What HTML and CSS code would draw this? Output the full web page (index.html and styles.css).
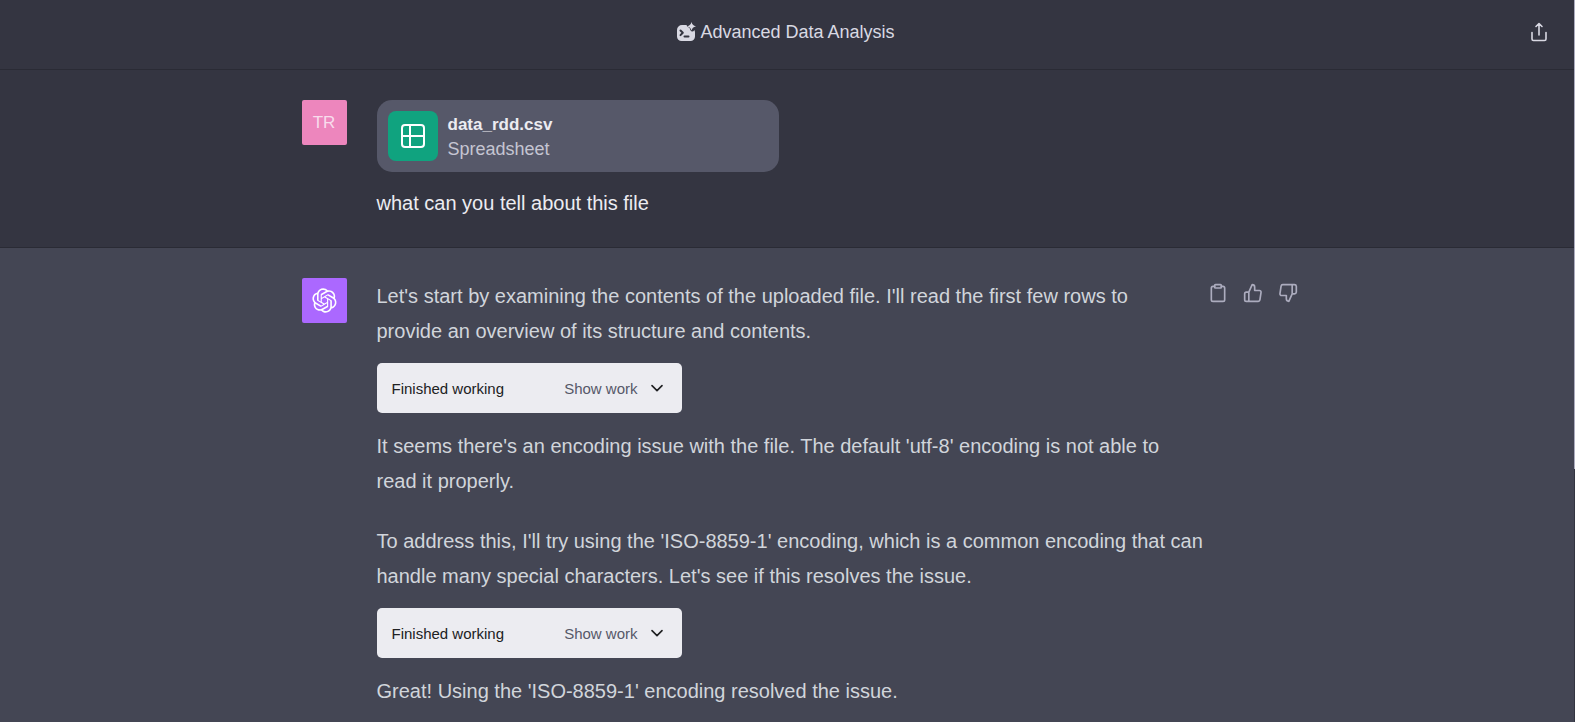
FILE: index.html
```html
<!DOCTYPE html>
<html lang="en">
<head>
<meta charset="utf-8">
<title>Advanced Data Analysis</title>
<link rel="stylesheet" href="styles.css">
</head>
<body>
<header class="topbar">
  <h1 class="title">
    <svg class="title-icon" viewBox="0 0 20 20" aria-hidden="true">
      <path fill="currentColor" d="M6 3h4.500q.5 2 2.500 2.600 1 .6 1.300 2.400.8 1.600 2 1.600t2-1.500q.7 1.400.7 2.400v4a4.500 4.500 0 0 1-4.500 4.500h-9A4.500 4.500 0 0 1 1 14.500V8a5 5 0 0 1 5-5Z"/>
      <path fill="currentColor" d="M15.500 0c.8 2.600 1.600 3.500 4.500 4.300-2.900.8-3.700 1.700-4.500 4.300-.8-2.600-1.600-3.500-4.500-4.300 2.900-.8 3.700-1.700 4.500-4.300Z"/>
      <path class="title-prompt" d="m4.500 8.500 2.300 2.300-2.300 2.300M8.500 14.500h4"/>
    </svg>
    <span>Advanced Data Analysis</span>
  </h1>
  <button class="icon-button share" type="button" aria-label="Share chat">
    <svg class="share-icon" viewBox="0 0 20 20" aria-hidden="true"><path d="M10 13V2M7 4.500 10 1.500 13 4.500M3 10.500V17q0 1.500 1.500 1.500h11q1.500 0 1.500-1.500v-6.500"/></svg>
  </button>
</header>
<main>
  <section class="turn turn-user">
    <div class="thread">
      <div class="avatar avatar-user">TR</div>
      <div class="message">
        <div class="file">
          <span class="file-tile">
            <svg class="file-icon" viewBox="0 0 24 24" aria-hidden="true"><rect x="1" y="1" width="22" height="22" rx="3"/><path d="M9 1v22M1 12h22"/></svg>
          </span>
          <div class="file-text">
            <div class="file-name">data_rdd.csv</div>
            <div class="file-kind">Spreadsheet</div>
          </div>
        </div>
        <p class="prompt">what can you tell about this file</p>
      </div>
    </div>
  </section>
  <section class="turn turn-assistant">
    <div class="thread">
      <div class="avatar avatar-assistant">
        <svg class="logo" viewBox="0 0 41 41" aria-hidden="true"><path d="M37.5324 16.8707C37.9808 15.5241 38.1363 14.0974 37.9886 12.6859C37.8409 11.2744 37.3934 9.91076 36.676 8.68622C35.6126 6.83404 33.9882 5.3676 32.0373 4.4985C30.0864 3.62941 27.9098 3.40259 25.8215 3.85078C24.8796 2.7893 23.7219 1.94125 22.4257 1.36341C21.1295 0.785575 19.7249 0.491269 18.3058 0.500197C16.1708 0.495044 14.0893 1.16803 12.3614 2.42214C10.6335 3.67624 9.34853 5.44666 8.6917 7.47815C7.30085 7.76286 5.98686 8.3414 4.8377 9.17505C3.68854 10.0087 2.73073 11.0782 2.02839 12.312C0.956464 14.1591 0.498905 16.2988 0.721698 18.4228C0.944492 20.5467 1.83612 22.5449 3.268 24.1293C2.81966 25.4759 2.66413 26.9026 2.81182 28.3141C2.95951 29.7256 3.40701 31.0892 4.12437 32.3138C5.18791 34.1659 6.8123 35.6322 8.76321 36.5013C10.7141 37.3704 12.8907 37.5973 14.9789 37.1492C15.9208 38.2107 17.0786 39.0587 18.3747 39.6366C19.6709 40.2144 21.0755 40.5087 22.4946 40.4998C24.6307 40.5054 26.7133 39.8321 28.4418 38.5772C30.1704 37.3223 31.4556 35.5506 32.1119 33.5179C33.5027 33.2332 34.8167 32.6547 35.9659 31.821C37.115 30.9874 38.0728 29.9178 38.7752 28.684C39.8458 26.8371 40.3023 24.6979 40.0789 22.5748C39.8556 20.4517 38.9639 18.4544 37.5324 16.8707ZM22.4978 37.8849C20.7443 37.8874 19.0459 37.2733 17.6994 36.1501C17.7601 36.117 17.8666 36.0586 17.936 36.0161L25.9004 31.4156C26.1003 31.3019 26.2663 31.137 26.3813 30.9378C26.4964 30.7386 26.5563 30.5124 26.5549 30.2825V19.0542L29.9213 20.998C29.9389 21.0068 29.9541 21.0198 29.9656 21.0359C29.977 21.052 29.9842 21.0707 29.9867 21.0902V30.3889C29.9842 32.375 29.1946 34.2791 27.7909 35.6841C26.3872 37.0892 24.4838 37.8806 22.4978 37.8849ZM6.39227 31.0064C5.51397 29.4888 5.19742 27.7107 5.49804 25.9832C5.55718 26.0187 5.66048 26.0818 5.73461 26.1244L13.699 30.7248C13.8975 30.8408 14.1233 30.902 14.3532 30.902C14.583 30.902 14.8088 30.8408 15.0073 30.7248L24.731 25.1103V28.9979C24.7321 29.0177 24.7283 29.0376 24.7199 29.0556C24.7115 29.0736 24.6988 29.0893 24.6829 29.1012L16.6317 33.7497C14.9096 34.7416 12.8643 35.0097 10.9447 34.4954C9.02506 33.9811 7.38785 32.7263 6.39227 31.0064ZM4.29707 13.6194C5.17156 12.0998 6.55279 10.9364 8.19885 10.3327C8.19885 10.4013 8.19491 10.5228 8.19491 10.6071V19.808C8.19351 20.0378 8.25334 20.2638 8.36823 20.4629C8.48312 20.6619 8.64893 20.8267 8.84863 20.9404L18.5723 26.5542L15.206 28.4979C15.1894 28.5089 15.1703 28.5155 15.1505 28.5173C15.1307 28.5191 15.1107 28.516 15.0924 28.5082L7.04046 23.8557C5.32135 22.8601 4.06716 21.2235 3.55289 19.3046C3.03862 17.3858 3.30624 15.3413 4.29707 13.6194ZM31.955 20.0556L22.2312 14.4411L25.5976 12.4981C25.6142 12.4872 25.6333 12.4805 25.6531 12.4787C25.6729 12.4769 25.6928 12.4801 25.7111 12.4879L33.7631 17.1364C34.9967 17.849 36.0017 18.8982 36.6606 20.1613C37.3194 21.4244 37.6047 22.849 37.4832 24.2684C37.3617 25.6878 36.8382 27.0432 35.9743 28.1759C35.1103 29.3086 33.9415 30.1717 32.6047 30.6641C32.6047 30.5947 32.6047 30.4733 32.6047 30.3889V21.188C32.6066 20.9586 32.5474 20.7328 32.4332 20.5338C32.319 20.3348 32.154 20.1698 31.955 20.0556ZM35.3055 15.0128C35.2464 14.9765 35.1431 14.9142 35.069 14.8717L27.1045 10.2712C26.906 10.1554 26.6803 10.0943 26.4504 10.0943C26.2206 10.0943 25.9948 10.1554 25.7963 10.2712L16.0726 15.8858V11.9982C16.0715 11.9783 16.0753 11.9585 16.0837 11.9405C16.0921 11.9225 16.1048 11.9068 16.1207 11.8949L24.1719 7.25025C25.4053 6.53903 26.8158 6.19376 28.2383 6.25482C29.6608 6.31589 31.0364 6.78077 32.2044 7.59508C33.3723 8.40939 34.2842 9.53945 34.8334 10.8531C35.3826 12.1667 35.5464 13.6095 35.3055 15.0128ZM14.2424 21.9419L10.8752 19.9981C10.8576 19.9893 10.8423 19.9763 10.8309 19.9602C10.8195 19.9441 10.8122 19.9254 10.8098 19.9058V10.6071C10.8107 9.18295 11.2173 7.78848 11.9819 6.58696C12.7466 5.38544 13.8377 4.42659 15.1275 3.82264C16.4173 3.21869 17.8524 2.99464 19.2649 3.1767C20.6775 3.35876 22.0089 3.93941 23.1034 4.85067C23.0427 4.88379 22.937 4.94215 22.8668 4.98473L14.9024 9.58517C14.7025 9.69878 14.5366 9.86356 14.4215 10.0626C14.3065 10.2616 14.2466 10.4877 14.2479 10.7175L14.2424 21.9419ZM16.071 17.9991L20.4018 15.4978L24.7325 17.9975V22.9985L20.4018 25.4983L16.071 22.9985V17.9991Z"/></svg>
      </div>
      <div class="message reply">
        <p class="lead">Let's start by examining the contents of the uploaded file. I'll read the first few rows to provide an overview of its structure and contents.</p>
        <div class="work">
          <span>Finished working</span>
          <button class="work-toggle" type="button">Show work
            <svg class="chevron" viewBox="0 0 24 24" aria-hidden="true"><path d="m6 8 6 6 6-6"/></svg>
          </button>
        </div>
        <p class="lead">It seems there's an encoding issue with the file. The default 'utf-8' encoding is not able to read it properly.</p>
        <p class="next">To address this, I'll try using the 'ISO-8859-1' encoding, which is a common encoding that can handle many special characters. Let's see if this resolves the issue.</p>
        <div class="work">
          <span>Finished working</span>
          <button class="work-toggle" type="button">Show work
            <svg class="chevron" viewBox="0 0 24 24" aria-hidden="true"><path d="m6 8 6 6 6-6"/></svg>
          </button>
        </div>
        <p>Great! Using the 'ISO-8859-1' encoding resolved the issue.</p>
      </div>
      <div class="actions">
        <button class="icon-button" type="button" aria-label="Copy">
          <svg class="action-icon" viewBox="0 0 24 24" aria-hidden="true"><path d="M16 4h2a2 2 0 0 1 2 2v14a2 2 0 0 1-2 2H6a2 2 0 0 1-2-2V6a2 2 0 0 1 2-2h2"/><rect x="8" y="2" width="8" height="4" rx="1"/></svg>
        </button>
        <button class="icon-button" type="button" aria-label="Good response">
          <svg class="action-icon" viewBox="0 0 24 24" aria-hidden="true"><path d="M14 9V5a3 3 0 0 0-3-3l-4 9v11h11.280a2 2 0 0 0 2-1.700l1.380-9a2 2 0 0 0-2-2.300zM7 22H4a2 2 0 0 1-2-2v-7a2 2 0 0 1 2-2h3"/></svg>
        </button>
        <button class="icon-button" type="button" aria-label="Bad response">
          <svg class="action-icon" viewBox="0 0 24 24" aria-hidden="true"><path d="M10 15v4a3 3 0 0 0 3 3l4-9V2H5.720a2 2 0 0 0-2 1.700l-1.380 9a2 2 0 0 0 2 2.300zm7-13h2.670A2.310 2.310 0 0 1 22 4v7a2.310 2.310 0 0 1-2.330 2H17"/></svg>
        </button>
      </div>
    </div>
  </section>
</main>
<div class="scrollbar" aria-hidden="true"><div class="scroll-thumb"></div></div>
</body>
</html>
```
FILE: styles.css
```css
* { box-sizing: border-box; }

body {
  margin: 0;
  min-height: 100vh;
  display: flex;
  flex-direction: column;
  overflow: hidden;
  background: #444654;
  color: #ececf1;
  font-family: "Liberation Sans", Arial, sans-serif;
  font-size: 20px;
  line-height: 35px;
}

p { margin: 0; }
button { font: inherit; }
svg { display: block; flex: none; }

.topbar {
  display: grid;
  grid-template-columns: 1fr auto 1fr;
  padding: 17px 26px 22px 22px;
  background: #343541;
  border-bottom: 1px solid #2a2b35;
}

.title {
  grid-column: 2;
  display: flex;
  align-items: center;
  gap: 4px;
  margin: 0;
  color: #d9d9e3;
  font-size: 18px;
  font-weight: 400;
  line-height: 30px;
}

.title-icon { width: 20px; height: 20px; }
.title-prompt { fill: none; stroke: #343541; stroke-width: 2; stroke-linecap: round; stroke-linejoin: round; }

.icon-button {
  display: flex;
  padding: 0;
  border: 0;
  background: none;
  color: #acacbe;
  cursor: pointer;
}

.share { justify-self: end; align-self: center; color: #d9d9e3; }
.share-icon { width: 20px; height: 20px; fill: none; stroke: currentColor; stroke-width: 1.6; stroke-linejoin: round; stroke-linecap: round; }

.turn { padding: 30px 0 30px 24px; }
.turn-user { background: #343541; border-bottom: 1px solid #2a2b35; padding-bottom: 26px; }
.turn-assistant { background: #444654; }

.thread {
  display: flex;
  max-width: 996px;
  margin: 0 auto;
}

.avatar {
  display: flex;
  flex: none;
  align-items: center;
  justify-content: center;
  width: 45px;
  height: 45px;
  margin-right: 30px;
  border-radius: 2px;
}
.avatar-user { background: #ed86bd; color: #f8dcec; font-size: 17px; }
.avatar-assistant { background: #ab68ff; }
.logo { width: 25px; height: 25px; fill: #fff; }

.message { flex: 0 1 831px; min-width: 0; }
.reply { padding-top: 1px; color: #d1d5db; }

.file {
  display: flex;
  align-items: center;
  gap: 10px;
  max-width: 402px;
  padding: 11px;
  border-radius: 15px;
  background: #565869;
}
.file-tile {
  display: flex;
  align-items: center;
  justify-content: center;
  width: 50px;
  height: 50px;
  border-radius: 8px;
  background: #10a37f;
}
.file-icon { width: 24px; height: 24px; fill: none; stroke: #fff; stroke-width: 2; }
.file-text { padding-top: 2px; font-size: 18px; line-height: 24px; }
.file-name { font-size: 17px; font-weight: 600; }
.file-kind { color: #c5c5d2; }
.prompt { margin-top: 14px; line-height: 35px; }

.lead { max-width: 815px; }
.next { margin-top: 25px; }

.work {
  display: flex;
  align-items: center;
  justify-content: space-between;
  max-width: 305px;
  margin: 14px 0 16px;
  padding: 11px 15px 9px;
  border-radius: 5px;
  background: #ececf1;
  color: #202123;
  font-size: 15px;
  line-height: 30px;
}
.work-toggle {
  display: flex;
  align-items: center;
  gap: 9px;
  padding: 0;
  border: 0;
  background: none;
  color: #565869;
  cursor: pointer;
}
.chevron { width: 20px; height: 20px; fill: none; stroke: #202123; stroke-width: 2; stroke-linecap: round; stroke-linejoin: round; }

.actions { display: flex; align-self: flex-start; gap: 15px; padding-top: 5px; }
.action-icon { width: 20px; height: 20px; fill: none; stroke: currentColor; stroke-width: 2; stroke-linecap: round; stroke-linejoin: round; }

.scrollbar { position: fixed; top: 0; right: 0; bottom: 0; width: 1px; background: #343541; }
.scroll-thumb { height: 65%; background: #acacbe; }
```
